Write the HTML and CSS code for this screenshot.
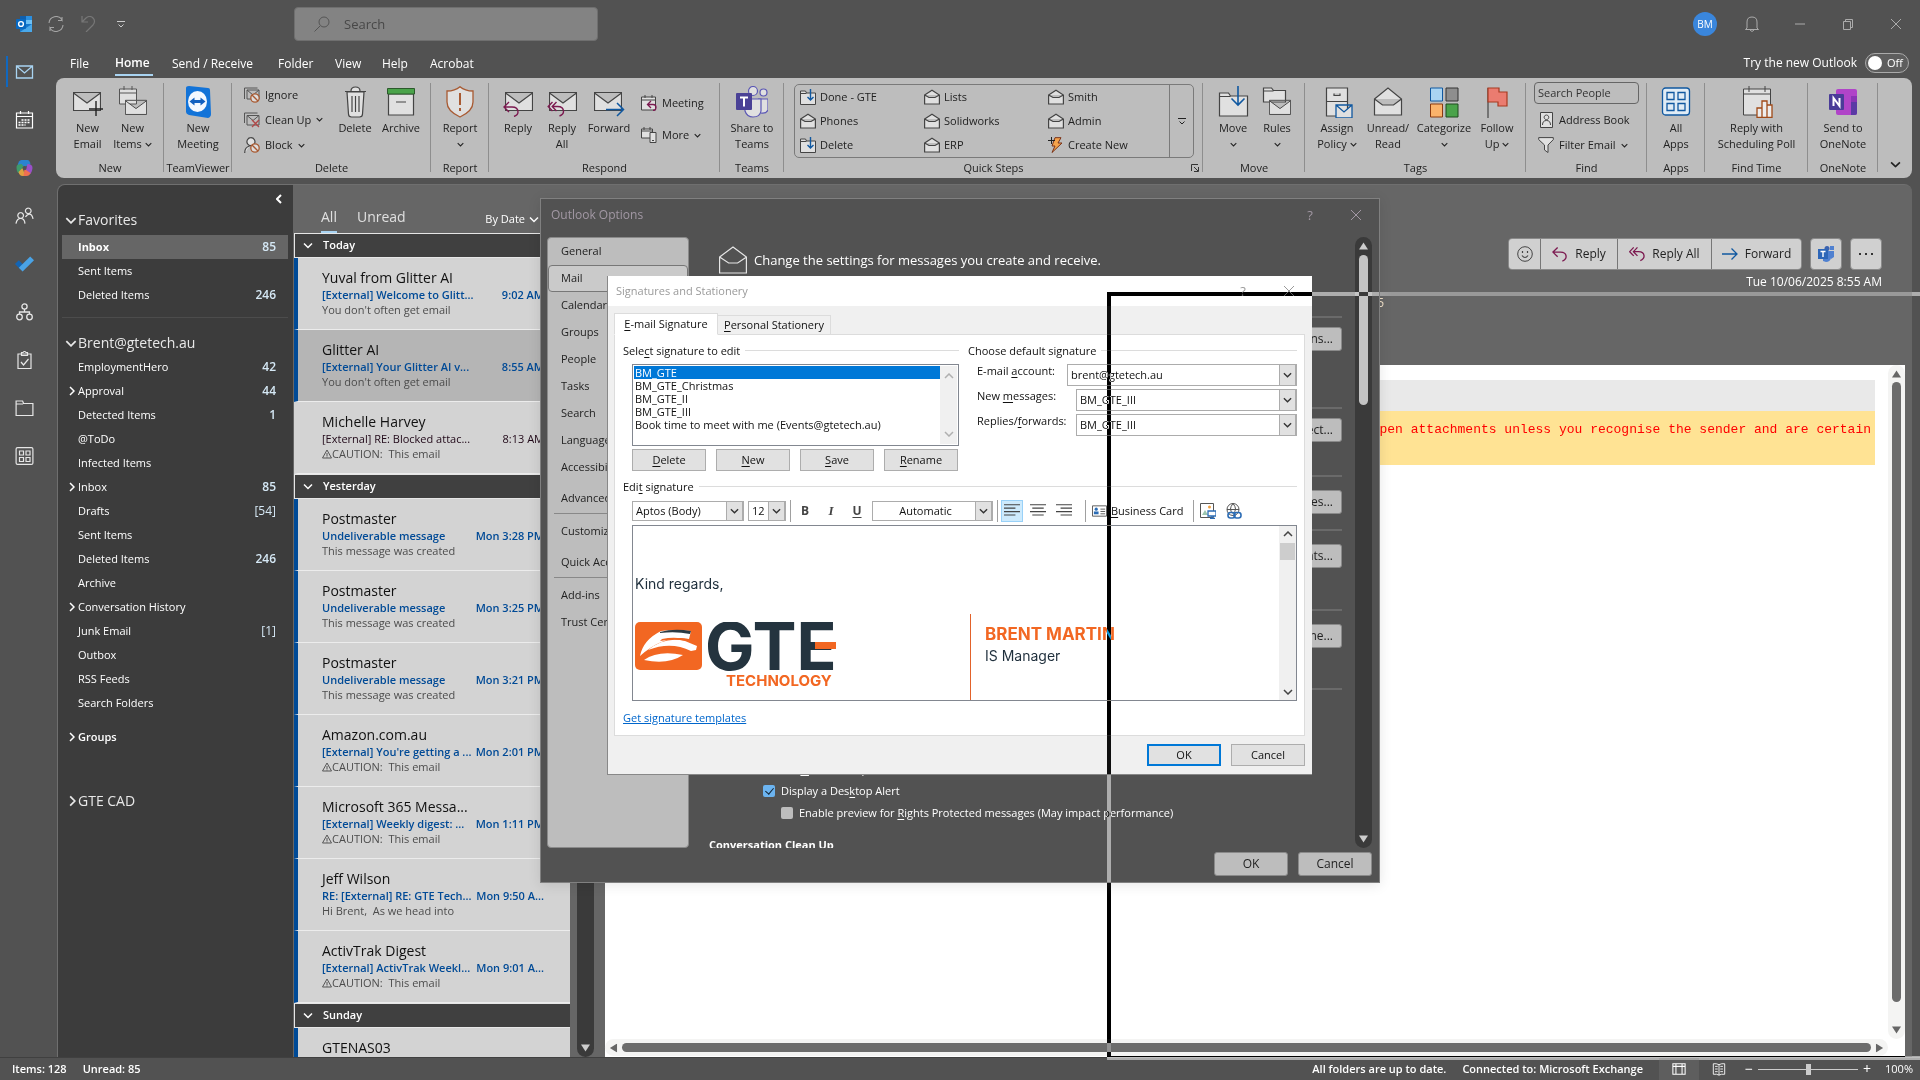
FILE: index.html
```html
<!DOCTYPE html>
<html lang="en">
<head>
<meta charset="utf-8">
<title>Inbox - Outlook</title>
<link rel="stylesheet" href="styles.css">
</head>
<body>
<svg class="sprite" aria-hidden="true">
  <symbol id="down" viewBox="0 0 10 6"><path d="M1 1l4 4 4-4" fill="none" stroke="currentColor" stroke-width="1.5"/></symbol>
  <symbol id="right" viewBox="0 0 6 10"><path d="M1 1l4 4-4 4" fill="none" stroke="currentColor" stroke-width="1.5"/></symbol>
  <symbol id="close" viewBox="0 0 12 12"><path d="M1 1l10 10M11 1L1 11" fill="none" stroke="currentColor"/></symbol>
  <symbol id="env" viewBox="0 0 28 22"><path d="M.5 2.500h27v18H.500zM.5 3l13.500 10L27.500 3" fill="#e0e0e0" stroke="#444" stroke-width="1.200"/></symbol>
  <symbol id="openenv" viewBox="0 0 16 16"><path d="M.6 6L8 1.200 15.400 6v9H.600zM.6 6L5 8.500h6L15.400 6" fill="#e0e0e0" stroke="#444" stroke-width="1.200"/></symbol>
  <symbol id="movefolder" viewBox="0 0 16 16"><path d="M.5 2h5l1 2h9v11.500H.500z" fill="#e0e0e0" stroke="#444"/><path d="M.5 4.500h6" stroke="#444"/><path d="M10.500 0v11M7.500 8l3 3 3-3" fill="none" stroke="#1058a0" stroke-width="1.400"/></symbol>
  <symbol id="back" viewBox="0 0 17 16"><path d="M6 1L1 6l5 5M1 6h8q6 0 6 5 0 3-4 4.500" fill="none" stroke="#7c1a50" stroke-width="1.400"/></symbol>
  <symbol id="backall" viewBox="0 0 17 16"><path d="M5 1L.700 5.500 5 10M9 1L4.700 5.500 9 10M5 5.500h5q6 0 6 5 0 3-4 4.500" fill="none" stroke="#7c1a50" stroke-width="1.400"/></symbol>
  <symbol id="tri" viewBox="0 0 10 8"><path d="M5 0l5 8H0z" fill="currentColor"/></symbol>
  <symbol id="warn" viewBox="0 0 10 10"><path d="M5 1l4.500 8h-9zM5 4v3M5 7.500v1" fill="none" stroke="#555"/></symbol>
</svg>

<div class="app">
  <header class="titlebar">
    <svg class="i16" viewBox="0 0 16 16"><path fill="#2a8fe0" d="M4 0h12v8H4z"/><path fill="#0f5fae" d="M4 0h6v4H4z"/><path fill="#6cc0f5" d="M10 4h6v4h-6z"/><path fill="#1477cc" d="M4 8h12v8H4z"/><path fill="#49a8ea" d="M4 16l12-8v8z"/><rect y="3" width="10" height="10" rx="1" fill="#0868c0"/><circle cx="5" cy="8" r="2.400" fill="none" stroke="#fff" stroke-width="1.400"/></svg>
    <svg class="i16" viewBox="0 0 16 16"><path d="M1 7a7 7 0 0 1 13-3V1M14 4.500h-4M15 9a7 7 0 0 1-13 3v3M2 11.500h4" fill="none" stroke="#a5a5a5" stroke-width="1.100"/></svg>
    <svg class="i16" viewBox="0 0 16 16"><path d="M2 0v6h6M2 6l4-4q4-3 7 0t0 7l-7 7" fill="none" stroke="#777" stroke-width="1.200"/></svg>
    <svg class="i8" viewBox="0 0 8 7"><path d="M0 .500h8M1.500 3.500L4 6l2.500-2.500" fill="none" stroke="#ccc"/></svg>
    <label class="searchbox">
      <svg class="i16" viewBox="0 0 16 16"><circle cx="10" cy="6" r="5" fill="none" stroke="#555"/><path d="M6 10l-5.500 5.500" stroke="#555"/></svg>
      <input type="text" placeholder="Search" aria-label="Search">
    </label>
    <div class="winbuttons">
      <span class="avatar">BM</span>
      <svg class="i16" viewBox="0 0 16 16"><path d="M3 12V6q0-5 5-5t5 5v6l1.500 1.500h-13zM6 14q2 3 4 0" fill="none" stroke="#ababab"/></svg>
      <svg class="i16" viewBox="0 0 16 16"><path d="M3 8h10" stroke="#ababab"/></svg>
      <svg class="i16" viewBox="0 0 16 16"><path d="M3.500 5.500h7v8h-7zM5.500 5V3.500h7v8H11" fill="none" stroke="#ababab"/></svg>
      <svg class="i16 grey" viewBox="-2 -2 16 16"><use href="#close" width="12" height="12"/></svg>
    </div>
  </header>

  <div class="workspace">
    <nav class="rail" aria-label="Apps">
      <a href="#" class="active" aria-label="Mail"><svg viewBox="0 0 18 18"><path d="M1 3h16v12H1zM1 3l8 7 8-7" fill="none" stroke="#a9d4f2" stroke-width="1.300"/></svg></a>
      <a href="#" aria-label="Calendar"><svg viewBox="0 0 18 18"><path d="M1 2h16v15H1zM1 5.500h16M5 0v3M13 0v3" fill="none" stroke="#fff" stroke-width="1.200"/><path d="M6 9h9M3 11.500h12M3 14h7" stroke="#fff" stroke-width="1.600" stroke-dasharray="2 1"/></svg></a>
      <a href="#" aria-label="Copilot"><svg viewBox="0 0 18 18"><path d="M6 1h6q2 0 3 4l-6 3-7-1q1-6 4-6z" fill="#2a83d0"/><path d="M1 8q0-3 5-3l2 2-2 7H3q-2-1-2-6z" fill="#3f9a6a"/><path d="M3 13l4-4 3 8H7q-3 0-4-4z" fill="#e0a040"/><path d="M12 5q5 0 5 4 0 2-2 6l-5-3z" fill="#9950c8"/><path d="M9 10l6 4q-1 3-4 3H8z" fill="#f07050"/><circle cx="9" cy="9" r="2" fill="#525252"/></svg></a>
      <a href="#" aria-label="People"><svg viewBox="0 0 20 18"><path d="M6 5.500a3 3 0 1 1-.1 0M1 17q1-5.500 5-5.500T10.500 17M14 .600a3 3 0 1 1-.1 0M11 10q2-3 4-3 3 0 4 5" fill="none" stroke="#e6e6e6" stroke-width="1.300"/></svg></a>
      <a href="#" aria-label="To Do"><svg viewBox="0 0 20 18"><path d="M0 9l4-4 5 5-4 4z" fill="#1264b4"/><path d="M4 13L16 1l4 4L8 17z" fill="#4aa3e6"/></svg></a>
      <a href="#" aria-label="Org Explorer"><svg viewBox="0 0 18 18"><g fill="none" stroke="#e6e6e6" stroke-width="1.300"><circle cx="9" cy="3.500" r="2.600"/><circle cx="4" cy="14" r="2.800"/><circle cx="14" cy="14" r="2.800"/><path d="M9 6v3M4 11V9h10v2"/></g></svg></a>
      <a href="#" aria-label="Tasks"><svg viewBox="0 0 18 18"><path d="M2.500 3h13v14.500h-13zM6 4.500v-3h1.500q1.500-2 3 0H12v3zM5.500 11l2.500 3 5-6" fill="none" stroke="#e6e6e6" stroke-width="1.200"/></svg></a>
      <a href="#" aria-label="Folders"><svg viewBox="0 0 18 18"><path d="M.6 2h6.500l1 2.500h9.300V16.500H.600zM.6 5h7" fill="none" stroke="#e6e6e6" stroke-width="1.200"/></svg></a>
      <a href="#" aria-label="More apps"><svg viewBox="0 0 18 18"><g fill="none" stroke="#e6e6e6" stroke-width="1.200"><rect x=".6" y=".6" width="16.800" height="16.800" rx="1.500"/><path d="M4 4h4v4H4zM10.500 4h4v4h-4zM4 10.500h4v4H4zM10.500 10.500h4v4h-4z"/></g></svg></a>
    </nav>

    <div class="stage">
      <div class="tabs">
        <a href="#" class="t-file">File</a><a href="#" class="t-home on">Home</a><a href="#" class="t-send">Send / Receive</a><a href="#" class="t-folder">Folder</a><a href="#" class="t-view">View</a><a href="#" class="t-help">Help</a><a href="#">Acrobat</a>
        <label class="trynew">Try the new Outlook <button class="toggle" type="button"><i></i>Off</button></label>
      </div>

      <div class="ribbon">
        <section class="group g-new"><div class="gbody center">
          <button class="big w45"><svg viewBox="0 0 32 32"><use href="#env" x="1" y="4" width="28" height="22"/><path d="M24 15v15M17 23h14" stroke="#222" stroke-width="1.400"/></svg>New<br>Email</button>
          <button class="big w45"><svg viewBox="0 0 32 32"><path d="M2.500 3h17v15h-17zM2.500 7h17M7 0v4M15 0v4" fill="#e0e0e0" stroke="#555"/><use href="#env" x="8" y="11" width="22" height="20"/></svg>New<span>Items <svg class="dn"><use href="#down"/></svg></span></button>
        </div><h2>New</h2></section>
        <section class="group g-tv"><div class="gbody center">
          <button class="big w64"><svg viewBox="0 0 32 32"><path d="M4 2q0-2 3-2l19 2q2 0 2 2l1 24q0 3-3 4L7 29q-3-1-3-3z" fill="#1273d8"/><ellipse cx="15.500" cy="15.500" rx="9.500" ry="10.500" fill="#f3f8ff"/><path d="M7.500 15.500l5-4v2.500h6v-2.500l5 4-5 4V17h-6v2.500z" fill="#1260c0"/></svg>New<br>Meeting</button>
        </div><h2>TeamViewer</h2></section>
        <section class="group g-del"><div class="gbody">
          <div class="smalls r26 delcol">
            <button><svg viewBox="0 0 16 16"><path d="M.5 12V1h13M3 3h12v9H3zl6 5 6-5" fill="none" stroke="#555"/><circle cx="11" cy="11" r="4.200" fill="#ddd" stroke="#a85a32" stroke-width="1.300"/><path d="M8 8l6 6" stroke="#a85a32" stroke-width="1.300"/></svg>Ignore</button>
            <button><svg viewBox="0 0 16 16"><path d="M.5 11V1h13M3 3.500h12V13H3zl6 5 6-5" fill="none" stroke="#555"/><path d="M8 8l7 7M15 8l-7 7" stroke="#b04848" stroke-width="1.300"/></svg>Clean Up <svg class="dn"><use href="#down"/></svg></button>
            <button><svg viewBox="0 0 16 16"><path d="M7 .700a4 4 0 1 1-.1 0M.700 16q0-6 5-7" fill="#e0e0e0" stroke="#444" stroke-width="1.200"/><circle cx="11" cy="11" r="4.200" fill="#ddd" stroke="#a85a32" stroke-width="1.300"/><path d="M8 8l6 6" stroke="#a85a32" stroke-width="1.300"/></svg>Block <svg class="dn"><use href="#down"/></svg></button>
          </div>
          <button class="big w46"><svg viewBox="0 0 32 32"><path d="M8 6h17l-1.500 22q0 3-3 3h-8q-3 0-3-3zM6 5.500h21M12 5q0-4 4.500-4T21 5M13 10v16M16.500 10v16M20 10v16" fill="#e0e0e0" stroke="#444" stroke-width="1.200"/></svg>Delete</button>
          <button class="big w46"><svg viewBox="0 0 32 32"><path d="M3.500 8h25v21h-25z" fill="#e0e0e0" stroke="#444" stroke-width="1.200"/><path d="M2.500 2.500h27V8h-27z" fill="#4aa34a" stroke="#2c5a2c"/><path d="M11 16h10" stroke="#444"/></svg>Archive</button>
        </div><h2>Delete</h2></section>
        <section class="group g-rep"><div class="gbody center">
          <button class="big w46"><svg viewBox="0 0 32 32"><path d="M16 .700Q21 5 29 5v11q0 9-13 15Q3 25 3 16V5q8 0 13-4.300z" fill="#e0e0e0" stroke="#a85a32" stroke-width="1.300"/><path d="M16 7v12M16 22v3" stroke="#a85a32" stroke-width="2"/></svg>Report<span><svg class="dn"><use href="#down"/></svg></span></button>
        </div><h2>Report</h2></section>
        <section class="group g-resp"><div class="gbody pad7">
          <button class="big w44"><svg viewBox="0 0 32 32"><use href="#env" x="3" y="4" width="28" height="22"/><use href="#back" x="1" y="15" width="17" height="16"/></svg>Reply</button>
          <button class="big w44"><svg viewBox="0 0 32 32"><use href="#env" x="3" y="4" width="28" height="22"/><use href="#backall" x="1" y="15" width="18" height="16"/></svg>Reply<br>All</button>
          <button class="big w50"><svg viewBox="0 0 32 32"><use href="#env" x="1" y="4" width="28" height="22"/><path d="M13 23.500h17M24 17l6.500 6.500-6.500 6.500" fill="none" stroke="#1058a0" stroke-width="1.500"/></svg>Forward</button>
          <div class="smalls r32">
            <button><svg viewBox="0 0 16 16"><path d="M.5 2h14v13H.500zM.5 5h14M4 0v3M11 0v3" fill="#e0e0e0" stroke="#444"/><path d="M10 6L6.500 9.500 10 13M7 9.500h5q3 0 3 3t-3 3" fill="none" stroke="#7c1a50" stroke-width="1.300"/></svg>Meeting</button>
            <button><svg viewBox="0 0 16 16"><path d="M.5 2h11v9H.500zM.5 4h11M3 0v3M9 0v3" fill="#e0e0e0" stroke="#444"/><path d="M9 5.500h6v10H9zM11 13.500h2" fill="#e0e0e0" stroke="#444"/></svg>More <svg class="dn"><use href="#down"/></svg></button>
          </div>
        </div><h2>Respond</h2></section>
        <section class="group g-teams"><div class="gbody center">
          <button class="big w64"><svg viewBox="0 0 32 32"><g fill="#e0e0e0" stroke="#5b57b5" stroke-width="1.200"><circle cx="17" cy="5" r="4.500"/><circle cx="27.500" cy="6.500" r="3.500"/><path d="M22 13h10v11q-2 4-7 3"/><path d="M9 13h16v12q-1 6-8 6-6 0-8-6z"/></g><rect x="0" y="7" width="16" height="17" rx="1" fill="#4a4196"/><path d="M4 11.500h8M8 11.500v9" stroke="#fff" stroke-width="2"/></svg>Share to<br>Teams</button>
        </div><h2>Teams</h2></section>
        <section class="group g-quick"><div class="gbody">
          <div class="quick">
            <div class="qgrid">
              <button><svg><use href="#movefolder"/></svg>Done - GTE</button><button><svg><use href="#openenv"/></svg>Lists</button><button><svg><use href="#openenv"/></svg>Smith</button>
              <button><svg><use href="#openenv"/></svg>Phones</button><button><svg><use href="#openenv"/></svg>Solidworks</button><button><svg><use href="#openenv"/></svg>Admin</button>
              <button><svg><use href="#movefolder"/></svg>Delete</button><button><svg><use href="#openenv"/></svg>ERP</button><button><svg viewBox="0 0 16 16"><path d="M7 .700h6L10 6h4L4 15.500 7 9H4z" fill="#f5a34c" stroke="#7a3218"/><path d="M3.500 0v7M0 3.500h7" stroke="#222"/></svg>Create New</button>
            </div>
            <button class="qmore" aria-label="More quick steps"><svg class="i8" viewBox="0 0 8 7"><path d="M0 .500h8M1.500 3.500L4 6l2.500-2.500" fill="none" stroke="#222"/></svg></button>
          </div>
        </div><h2>Quick Steps</h2><svg class="launcher" viewBox="0 0 8 8"><path d="M.5 7V.500H7M3 3l4 4M7.500 3v4.500H3" fill="none" stroke="#333"/></svg></section>
        <section class="group g-move"><div class="gbody pad8">
          <button class="big w44"><svg viewBox="0 0 32 32"><path d="M2.500 7h9l2 3h17v20h-28zM2.500 10.500h11" fill="#e0e0e0" stroke="#444" stroke-width="1.200"/><path d="M21 0v19M14.500 12.500L21 19l6.500-6.500" fill="none" stroke="#1058a0" stroke-width="1.600"/></svg>Move<span><svg class="dn"><use href="#down"/></svg></span></button>
          <button class="big w44"><svg viewBox="0 0 32 32"><path d="M2.500 2h8l2 2.500h12V16h-22zM2.500 5h10" fill="#e0e0e0" stroke="#444" stroke-width="1.200"/><use href="#env" x="8" y="11" width="22" height="20"/></svg>Rules<span><svg class="dn"><use href="#down"/></svg></span></button>
        </div><h2>Move</h2></section>
        <section class="group g-tags"><div class="gbody pad6">
          <button class="big w52"><svg viewBox="0 0 32 32"><path d="M5.500 2h21v28h-21zM5.500 15.500h21M13 7.500v2h6v-2" fill="#e0e0e0" stroke="#444" stroke-width="1.200"/><path d="M15 19h16v13H15zl8 7 8-7" fill="#e0e0e0" stroke="#1058a0" stroke-width="1.300"/></svg>Assign<span>Policy <svg class="dn"><use href="#down"/></svg></span></button>
          <button class="big w50"><svg viewBox="0 0 32 32"><path d="M2.500 13L16 2l13.500 11v16h-27zl8 6h11l8-6" fill="#e0e0e0" stroke="#444" stroke-width="1.200"/></svg>Unread/<br>Read</button>
          <button class="big w62"><svg viewBox="0 0 32 32"><path d="M2.500 2h12v13h-12z" fill="#a9d4f2" stroke="#1058a0"/><path d="M18 2h12v13H18z" fill="#8e8e8e" stroke="#333"/><path d="M2.500 18h12v13h-12z" fill="#fbb36b" stroke="#8a3a10"/><path d="M18 18h12v13H18z" fill="#4aa34a" stroke="#1f4a1f"/></svg>Categorize<span><svg class="dn"><use href="#down"/></svg></span></button>
          <button class="big w44"><svg viewBox="0 0 32 32"><path d="M7 2v30" stroke="#444" stroke-width="1.200"/><path d="M7 2h11v4h8v14h-9v-4H7z" fill="#ea7c70" stroke="#a83a20" stroke-width="1.200"/></svg>Follow<span>Up <svg class="dn"><use href="#down"/></svg></span></button>
        </div><h2>Tags</h2></section>
        <section class="group g-find"><div class="gbody">
          <div class="smalls r26 findcol">
            <input type="text" placeholder="Search People" aria-label="Search People">
            <button><svg viewBox="0 0 16 16"><path d="M2.500.500h12v15h-12zM8.500 3a2.300 2.300 0 1 1-.1 0M4.500 13q0-4.500 4-4.500t4 4.500" fill="#e0e0e0" stroke="#444"/></svg>Address Book</button>
            <button><svg viewBox="0 0 16 16"><path d="M.7.600h14.600v2L10 8v7.500L6.500 13V8L.700 2.600z" fill="#e0e0e0" stroke="#444"/></svg>Filter Email <svg class="dn"><use href="#down"/></svg></button>
          </div>
        </div><h2>Find</h2></section>
        <section class="group g-apps"><div class="gbody center">
          <button class="big w44"><svg viewBox="0 0 32 32"><g fill="#e0ecf6" stroke="#1058a0" stroke-width="1.300"><rect x="2.500" y="2" width="27" height="27" rx="3"/><path d="M7 6.500h7v7H7zM18 6.500h7v7h-7zM7 17.500h7v7H7zM18 17.500h7v7h-7z"/></g></svg>All<br>Apps</button>
        </div><h2>Apps</h2></section>
        <section class="group g-time"><div class="gbody center">
          <button class="big w100"><svg viewBox="0 0 32 32"><path d="M2.500 3h27v26h-27zM2.500 8h27M8 0v6M24 0v6" fill="#e0e0e0" stroke="#444"/><path d="M16 22h5v9.500h-5zM21 15h5v16.500h-5zM26 19h5v12.500h-5z" fill="#eee" stroke="#a04a18" stroke-width="1.300"/></svg>Reply with<br>Scheduling Poll</button>
        </div><h2>Find Time</h2></section>
        <section class="group g-note"><div class="gbody center">
          <button class="big w64"><svg viewBox="0 0 32 32"><rect x="9" y="3" width="21" height="26" rx="2" fill="#b044c8"/><path d="M24 10h6v6h-6z" fill="#8a35b5"/><path d="M24 16h6v11q0 2-2 2h-4z" fill="#5b3aa5"/><rect x="2" y="8" width="15" height="16" rx="1" fill="#4a3c98"/><path d="M6.500 20v-8l6 8v-8" fill="none" stroke="#fff" stroke-width="2"/></svg>Send to<br>OneNote</button>
        </div><h2>OneNote</h2></section>
        <svg class="collapse" viewBox="0 0 10 6"><use href="#down"/></svg>
      </div>

      <main class="panes">
        <aside class="folders">
          <div class="fold"><svg viewBox="0 0 6 10"><path d="M5 1L1 5l4 4" fill="none" stroke="#fff" stroke-width="2"/></svg></div>
          <h3><svg class="wide"><use href="#down"/></svg>Favorites</h3>
          <a href="#" class="sel"><b>Inbox</b><em>85</em></a>
          <a href="#">Sent Items</a>
          <a href="#">Deleted Items<em>246</em></a>
          <hr>
          <h3><svg class="wide"><use href="#down"/></svg>Brent@gtetech.au</h3>
          <a href="#">EmploymentHero<em>42</em></a>
          <a href="#" class="sub"><svg><use href="#right"/></svg>Approval<em>44</em></a>
          <a href="#">Detected Items<em>1</em></a>
          <a href="#">@ToDo</a>
          <a href="#">Infected Items</a>
          <a href="#" class="sub"><svg><use href="#right"/></svg>Inbox<em>85</em></a>
          <a href="#">Drafts<em class="thin">[54]</em></a>
          <a href="#">Sent Items</a>
          <a href="#">Deleted Items<em>246</em></a>
          <a href="#">Archive</a>
          <a href="#" class="sub"><svg><use href="#right"/></svg>Conversation History</a>
          <a href="#">Junk Email<em class="thin">[1]</em></a>
          <a href="#">Outbox</a>
          <a href="#">RSS Feeds</a>
          <a href="#">Search Folders</a>
          <a href="#" class="sub groups"><svg><use href="#right"/></svg>Groups</a>
          <h3 class="cad"><svg class="tall"><use href="#right"/></svg>GTE CAD</h3>
        </aside>

        <section class="maillist">
          <div class="filters"><a href="#" class="on">All</a><a href="#">Unread</a><button>By Date <svg class="wide"><use href="#down"/></svg></button></div>
          <div class="scrollwrap">
            <div class="messages">
              <h4><svg class="wide"><use href="#down"/></svg>Today</h4>
              <article class="unread"><h5>Yuval from Glitter AI</h5><p class="subj">[External] Welcome to Glitt...<time>9:02 AM</time></p><p class="prev">You don't often get email</p></article>
              <article class="unread current"><h5>Glitter AI</h5><p class="subj">[External] Your Glitter AI v...<time>8:55 AM</time></p><p class="prev">You don't often get email</p></article>
              <article><h5>Michelle Harvey</h5><p class="subj">[External] RE: Blocked attac...<time>8:13 AM</time></p><p class="prev"><svg><use href="#warn"/></svg>CAUTION:&nbsp; This email</p></article>
              <h4><svg class="wide"><use href="#down"/></svg>Yesterday</h4>
              <article class="unread"><h5>Postmaster</h5><p class="subj">Undeliverable message<time>Mon 3:28 PM</time></p><p class="prev">This message was created</p></article>
              <article class="unread"><h5>Postmaster</h5><p class="subj">Undeliverable message<time>Mon 3:25 PM</time></p><p class="prev">This message was created</p></article>
              <article class="unread"><h5>Postmaster</h5><p class="subj">Undeliverable message<time>Mon 3:21 PM</time></p><p class="prev">This message was created</p></article>
              <article class="unread"><h5>Amazon.com.au</h5><p class="subj">[External] You're getting a ...<time>Mon 2:01 PM</time></p><p class="prev"><svg><use href="#warn"/></svg>CAUTION:&nbsp; This email</p></article>
              <article class="unread"><h5>Microsoft 365 Messa...</h5><p class="subj">[External] Weekly digest: ...<time>Mon 1:11 PM</time></p><p class="prev"><svg><use href="#warn"/></svg>CAUTION:&nbsp; This email</p></article>
              <article class="unread"><h5>Jeff Wilson</h5><p class="subj">RE: [External] RE: GTE Tech...<time>Mon 9:50 A...</time></p><p class="prev">Hi Brent,&nbsp; As we head into</p></article>
              <article class="unread"><h5>ActivTrak Digest</h5><p class="subj">[External] ActivTrak Weekl...<time>Mon 9:01 A...</time></p><p class="prev"><svg><use href="#warn"/></svg>CAUTION:&nbsp; This email</p></article>
              <h4><svg class="wide"><use href="#down"/></svg>Sunday</h4>
              <article class="unread"><h5>GTENAS03</h5></article>
            </div>
            <div class="vbar dark"><svg class="flip"><use href="#tri"/></svg></div>
          </div>
        </section>

        <section class="reading">
          <div class="actions">
            <div class="joined">
              <button aria-label="React"><svg viewBox="0 0 16 16"><circle cx="8" cy="8" r="7.300" fill="none" stroke="#444"/><path d="M5 9.500q3 4 6 0M5.500 5v2M10.500 5v2" fill="none" stroke="#444" stroke-width="1.200"/></svg></button><button><svg><use href="#back"/></svg>Reply</button><button><svg><use href="#backall"/></svg>Reply All</button><button><svg viewBox="0 0 16 16"><path d="M0 8h15M9.500 2.500L15 8l-5.500 5.500" fill="none" stroke="#1058a0" stroke-width="1.300"/></svg>Forward</button>
            </div>
            <button class="solo" aria-label="Share to Teams"><svg viewBox="0 0 16 16"><circle cx="9" cy="2.500" r="2.500" fill="#3a62b0"/><path d="M5 5h8v7q-1 4-5 4l-3-1zM12 0h4v4h-4zM13 5h3v6l-3 2z" fill="#4f80d0"/><path d="M0 3h10v10H0z" fill="#2d66b8"/><path d="M2.500 5.500h5M5 5.500v5.500" stroke="#fff" stroke-width="1.400"/></svg></button>
            <button class="solo" aria-label="More actions"><svg viewBox="0 0 16 16"><path d="M1 8h2M7 8h2M13 8h2" stroke="#333" stroke-width="2"/></svg></button>
          </div>
          <div class="stamp">Tue 10/06/2025 8:55 AM</div>
          <div class="sent">Tue 10/06/2025</div>
          <div class="paper">
            <div class="prow">
              <div class="mail"><div class="strip"></div><p class="caution">open attachments unless you recognise the sender and are certain</p></div>
              <div class="vbar light"><svg><use href="#tri"/></svg><i></i><svg class="flip"><use href="#tri"/></svg></div>
            </div>
            <div class="hbar"><svg class="left"><use href="#tri"/></svg><i></i><svg class="rt"><use href="#tri"/></svg></div>
          </div>
        </section>
      </main>
    </div>
  </div>

  <footer class="status">
    <span>Items: 128</span><span>Unread: 85</span>
    <span class="push">All folders are up to date.</span><span>Connected to: Microsoft Exchange</span>
    <div class="views">
      <button class="view on" aria-label="Normal view"><svg viewBox="0 0 16 16"><path d="M1 2h14v12H1zM1 5h14M4.500 2v12M11.500 2v12" fill="none" stroke="#fff" stroke-width="1.200"/></svg></button>
      <button class="view" aria-label="Reading view"><svg viewBox="0 0 16 16"><path d="M8 3q-3-1.500-6.500-1v12q4-.500 6.500 1 2.500-1.500 6.500-1V2Q11 1.500 8 3v12M3.500 5h3M3.500 8h3M3.500 11h3M9.500 5h3M9.500 8h3M9.500 11h3" fill="none" stroke="#fff"/></svg></button>
      <div class="zoom"><b>−</b><div class="track"><i></i></div><b>+</b></div>
      <span class="pct">100%</span>
    </div>
  </footer>

  <div class="options" role="dialog" aria-label="Outlook Options">
    <div class="dtitle"><span>Outlook Options</span><i>?</i><svg><use href="#close"/></svg></div>
    <div class="obody">
      <nav class="onav"><a href="#">General</a><a href="#" class="on">Mail</a><a href="#">Calendar</a><a href="#">Groups</a><a href="#">People</a><a href="#">Tasks</a><a href="#">Search</a><a href="#">Language</a><a href="#">Accessibility</a><a href="#" class="gap">Advanced</a><hr><a href="#">Customize Ribbon</a><a href="#" class="gap">Quick Access Toolbar</a><hr><a href="#">Add-ins</a><a href="#">Trust Center</a></nav>
      <div class="ocontent">
        <p class="lead"><svg viewBox="0 0 28 28"><path d="M.6 11L14 1l13.400 10v16H.600zl9 6h9l9-6" fill="none" stroke="#e6e6e6" stroke-width="1.200"/></svg>Change the settings for messages you create and receive.</p>
        <div class="sec s91"><button>Editor Options...</button></div>
        <div class="sec s68"><button>Spelling and Autocorrect...</button></div>
        <div class="sec s54 low"><button>Signatures...</button></div>
        <div class="sec s80 low"><button>Stationery and Fonts...</button></div>
        <div class="sec s79 low"><button>Reading Pane...</button></div>
        <div class="sec s70"></div>
        <label class="chk"><input type="checkbox" checked><span>Sho<u>w</u> an envelope icon in the taskbar</span></label>
        <label class="chk"><input type="checkbox" checked><span>Display a Des<u>k</u>top Alert</span></label>
        <label class="chk inset"><input type="checkbox"><span>Enable preview for <u>R</u>ights Protected messages (May impact performance)</span></label>
        <h6>Conversation Clean Up</h6>
      </div>
      <div class="vbar dark obar"><svg><use href="#tri"/></svg><i></i><svg class="flip"><use href="#tri"/></svg></div>
    </div>
    <div class="ofoot"><button>OK</button><button>Cancel</button></div>
  </div>

  <div class="sig" role="dialog" aria-label="Signatures and Stationery">
    <div class="dtitle"><span>Signatures and Stationery</span><i>?</i><svg><use href="#close"/></svg></div>
    <div class="stabs"><button class="on"><u>E</u>-mail Signature</button><button><u>P</u>ersonal Stationery</button></div>
    <div class="spanel">
      <div class="cols">
        <div class="lcol">
          <div class="legend">Sele<u>c</u>t signature to edit</div>
          <div class="listbox"><ul role="listbox"><li class="on">BM_GTE</li><li>BM_GTE_Christmas</li><li>BM_GTE_II</li><li>BM_GTE_III</li><li>Book time to meet with me (Events@gtetech.au)</li></ul>
            <div class="wbar off"><svg class="up"><use href="#down"/></svg><svg><use href="#down"/></svg></div></div>
          <div class="btns"><button><u>D</u>elete</button><button><u>N</u>ew</button><button><u>S</u>ave</button><button><u>R</u>ename</button></div>
        </div>
        <div class="rcol">
          <div class="legend">Choose default signature</div>
          <div class="frow"><label for="acc">E-mail <u>a</u>ccount:</label><div class="combo c230"><select id="acc"><option>brent@gtetech.au</option></select><span><svg><use href="#down"/></svg></span></div></div>
          <div class="frow"><label for="nm">New <u>m</u>essages:</label><div class="combo c221"><select id="nm"><option>BM_GTE_III</option></select><span><svg><use href="#down"/></svg></span></div></div>
          <div class="frow"><label for="rf">Replies/<u>f</u>orwards:</label><div class="combo c221"><select id="rf"><option>BM_GTE_III</option></select><span><svg><use href="#down"/></svg></span></div></div>
        </div>
      </div>
      <div class="legend edit">Edi<u>t</u> signature</div>
      <div class="toolbar">
        <div class="combo c112"><select aria-label="Font"><option>Aptos (Body)</option></select><span><svg><use href="#down"/></svg></span></div>
        <div class="combo c38"><select aria-label="Size"><option>12</option></select><span><svg><use href="#down"/></svg></span></div>
        <i class="vs"></i>
        <button class="tb"><b>B</b></button><button class="tb"><em>I</em></button><button class="tb"><b><u>U</u></b></button>
        <div class="combo c121"><select aria-label="Font colour"><option>Automatic</option></select><span><svg><use href="#down"/></svg></span></div>
        <i class="vs"></i>
        <button class="tb on" aria-label="Align left"><svg viewBox="0 0 14 14"><path d="M0 1.500h14M0 4.500h10M0 7.500h14M0 10.500h10" stroke="#444"/></svg></button>
        <button class="tb" aria-label="Align centre"><svg viewBox="0 0 14 14"><path d="M0 1.500h14M2 4.500h10M0 7.500h14M2 10.500h10" stroke="#444"/></svg></button>
        <button class="tb" aria-label="Align right"><svg viewBox="0 0 14 14"><path d="M0 1.500h14M4 4.500h10M0 7.500h14M4 10.500h10" stroke="#444"/></svg></button>
        <i class="vs wide-gap"></i>
        <button class="card"><svg viewBox="0 0 16 12"><path d="M.5.500h15v11H.500zM9 4h5M9 6.500h5M9 9h5" fill="#fff" stroke="#555"/><circle cx="4.500" cy="4" r="1.700" fill="#2b6cb5"/><path d="M2 9.500V6.500h5v3z" fill="#2b6cb5"/></svg><span><u>B</u>usiness Card</span></button>
        <i class="vs"></i>
        <button class="tb" aria-label="Picture"><svg viewBox="0 0 16 16"><path d="M.5.500h13v14H.500z" fill="#fff" stroke="#555"/><path d="M2 12l3-5 3 5z" fill="#9cc6b0"/><circle cx="9.500" cy="4" r="1.500" fill="#f0a040"/><path d="M8 8h8v5H8zM10 15.500h5M12 13v2" fill="#fff" stroke="#2b6cb5" stroke-width="1.300"/></svg></button>
        <button class="tb" aria-label="Hyperlink"><svg viewBox="0 0 16 16"><circle cx="7" cy="6.500" r="6" fill="none" stroke="#555"/><path d="M1 6.500h12M7 .500q-5 6 0 10M7 .500q5 6 0 10" fill="none" stroke="#555"/><rect x="2" y="9.500" width="7" height="5.500" rx="2.500" fill="none" stroke="#2b6cb5" stroke-width="1.600"/><rect x="8" y="9.500" width="7" height="5.500" rx="2.500" fill="none" stroke="#2b6cb5" stroke-width="1.600"/></svg></button>
      </div>
      <div class="editor">
        <div class="doc">
          <p class="kind">Kind regards,</p>
          <div class="sigrow">
            <svg class="logo" viewBox="0 0 202 66" role="img" aria-label="GTE Technology">
              <rect x="0" y="0" width="67" height="48" rx="5" fill="#f26722"/>
              <path d="M5 34Q8 18 26 9q14-2 30 0l-2 8Q30 12 5 34z" fill="#fff"/>
              <path d="M25 10q14-4 31-1l-1 3q-14-3-30-1z" fill="#2b3a42"/>
              <path d="M13 28Q30 14 50 19l12 5-1 4-5 1Q36 19 13 28z" fill="#fff"/>
              <path d="M27 17q14-3 27 1l-1 1q-14-3-28 0z" fill="#f26722"/>
              <path d="M9 38q14-10 39-5-15 10-39 5z" fill="#fff"/>
              <text x="70" y="48" class="gte">GTE</text>
              <rect x="180" y="20" width="21" height="7" fill="#f26722"/>
              <text x="91" y="64" class="tech">TECHNOLOGY</text>
            </svg>
            <div class="who"><strong>BRENT MARTIN</strong><span>IS Manager</span></div>
          </div>
        </div>
        <div class="wbar"><svg class="up"><use href="#down"/></svg><i></i><svg><use href="#down"/></svg></div>
      </div>
      <a href="#" class="tmpl">Get signature templates</a>
    </div>
    <div class="sfoot"><button class="ok">OK</button><button>Cancel</button></div>
  </div>

  <div class="marquee"></div>
</div>
</body>
</html>
```
FILE: styles.css
```css
* { box-sizing: border-box; }
body { margin: 0; background: #525252; font: 11px/16px "Open Sans", "Noto Sans", sans-serif; color: #fff; }
h2, h3, h4, h5, h6, p, ul { margin: 0; padding: 0; font-weight: 400; list-style: none; }
button, input, select { font: inherit; color: inherit; margin: 0; padding: 0; border: 0; background: none; }
a { color: inherit; text-decoration: none; }
i { font-style: normal; }
u { text-underline-offset: 2px; }
svg { display: block; flex: none; }
.sprite { position: absolute; width: 0; height: 0; }
.app { position: relative; display: flex; flex-direction: column; height: 100vh; overflow: hidden; background: #525252; }
.i16 { width: 16px; height: 16px; }
.i8 { width: 8px; height: 7px; }
.grey { color: #ababab; }
.dn { display: inline-block; width: 7px; height: 5px; }
.wide { width: 12px; height: 7px; }

/* Title bar */
.titlebar { display: flex; align-items: center; height: 48px; padding: 0 16px; gap: 16px; flex: none; }
.titlebar > .i8 { margin-left: 5px; }
.searchbox { display: flex; align-items: center; width: 304px; height: 34px; margin-left: 153px; padding: 0 19px; gap: 14px; background: #838383; border: 1px solid #6f6f6f; border-radius: 4px; font-size: 13px; }
.searchbox input { flex: 1; min-width: 0; outline: 0; }
.searchbox input::placeholder { color: #484848; opacity: 1; }
.winbuttons { display: flex; align-items: center; gap: 32px; margin-left: auto; }
.avatar { width: 24px; height: 24px; margin-right: -5px; border-radius: 50%; background: #3a86dc; font-size: 10px; line-height: 24px; text-align: center; }

/* Application rail */
.workspace { display: flex; flex: 1; min-height: 0; }
.rail { width: 56px; flex: none; }
.rail a { display: flex; align-items: center; justify-content: center; width: 48px; height: 48px; }
.rail a.active { background: linear-gradient(#1068c0, #1068c0) 6px 8px / 2px 31px no-repeat; }
.rail svg { width: 19px; height: 18px; }
.stage { display: flex; flex-direction: column; flex: 1; min-width: 0; }

/* Ribbon */
.tabs { display: flex; align-items: center; height: 30px; padding: 0 11px 0 14px; font-size: 12px; flex: none; }
.tabs a { line-height: 22px; padding-top: 2px; }
.tabs .on { font-weight: 600; border-bottom: 2px solid #a9d4f2; }
.t-file { width: 25px; margin-right: 20px; }
.t-home { width: 38px; margin-right: 19px; }
.t-send { width: 90px; margin-right: 16px; }
.t-folder { width: 41px; margin-right: 16px; }
.t-view { width: 31px; margin-right: 16px; }
.t-help { width: 32px; margin-right: 16px; }
.trynew { display: flex; align-items: center; gap: 8px; margin-left: auto; }
.toggle { display: flex; align-items: center; gap: 5px; width: 44px; height: 20px; padding-left: 2px; border: 1px solid #aaa; border-radius: 10px; font-size: 11px; background: #5e5e5e; }
.toggle i { width: 14px; height: 14px; border-radius: 50%; background: #fff; }
.ribbon { display: flex; height: 100px; margin-right: 8px; background: #bdbdbd; border-radius: 8px; color: #222; flex: none; }
.group { position: relative; display: flex; flex-direction: column; flex: none; background: linear-gradient(#8e8e8e, #8e8e8e) right 5px / 1px 89px no-repeat; }
.group h2 { text-align: center; font-size: 11px; line-height: 20px; }
.gbody { display: flex; height: 80px; }
.center { justify-content: center; }
.pad6 { padding-left: 6px; } .pad7 { padding-left: 7px; } .pad8 { padding-left: 8px; }
.g-new { width: 108px; } .g-tv { width: 68px; } .g-del { width: 199px; } .g-rep { width: 58px; } .g-resp { width: 231px; } .g-teams { width: 64px; } .g-quick { width: 419px; } .g-move { width: 102px; } .g-tags { width: 221px; } .g-find { width: 121px; } .g-apps { width: 58px; } .g-time { width: 103px; } .g-note { width: 70px; }
.w44 { width: 44px; } .w45 { width: 45px; } .w46 { width: 46px; } .w50 { width: 50px; } .w52 { width: 52px; } .w62 { width: 62px; } .w64 { width: 64px; } .w100 { width: 100px; }
.big { display: flex; flex-direction: column; align-items: center; padding-top: 8px; line-height: 16px; white-space: nowrap; }
.big > svg { width: 32px; height: 32px; margin-bottom: 2px; }
.big span { display: flex; align-items: center; gap: 3px; height: 16px; }
.smalls { display: flex; flex-direction: column; padding-top: 4px; }
.smalls button { display: flex; align-items: center; gap: 5px; white-space: nowrap; }
.smalls button > svg:first-child { width: 16px; height: 16px; }
.r26 button { height: 26px; }
.r32 { padding: 9px 0 0 7px; }
.r32 button { height: 32px; }
.delcol { width: 100px; padding-left: 12px; }
.findcol { width: 114px; padding-left: 8px; }
.findcol input { width: 105px; height: 22px; margin-bottom: 3px; padding: 0 3px; border: 1px solid #666; border-radius: 4px; outline: 0; }
.findcol input::placeholder { color: #333; opacity: 1; }
.findcol button { padding-left: 4px; }
.quick { display: flex; width: 400px; height: 74px; margin: 6px 0 0 10px; border: 1px solid #7a7a7a; border-radius: 5px; }
.qgrid { display: grid; flex: 1; grid-template-columns: 124px 124px 1fr; padding-left: 5px; }
.qgrid button { display: flex; align-items: center; gap: 4px; }
.qgrid svg { width: 16px; height: 16px; }
.qmore { display: flex; align-items: center; justify-content: center; width: 24px; border-left: 1px solid #7a7a7a; }
.launcher { position: absolute; right: 4px; bottom: 6px; width: 8px; height: 8px; }
.collapse { width: 11px; height: 7px; margin: 83px auto 0; }

/* Panes */
.panes { display: flex; flex: 1; min-height: 0; margin: 6px 8px 0 1px; border: 1px solid #6f6f6f; border-width: 1px 0 0 1px; border-radius: 8px 8px 0 0; background: #666; overflow: hidden; }
.folders { width: 235px; background: #3c3c3c; flex: none; }
.fold { display: flex; justify-content: flex-end; height: 23px; padding: 9px 11px 0 0; }
.fold svg { width: 6px; height: 10px; }
.folders h3 { display: flex; align-items: center; gap: 1px; height: 24px; padding-left: 7px; font-size: 14px; color: #e8e8e8; }
.folders h3 + a.sel { margin-top: 3px; }
.folders a { display: flex; align-items: center; height: 24px; margin: 0 5px 0 4px; padding: 0 12px 0 16px; }
.folders a.sel { background: #666; }
.folders a.sub { padding-left: 7px; gap: 3px; }
.folders a.sub svg { width: 6px; height: 10px; }
.folders b { font-weight: 700; }
.folders em { margin-left: auto; font-style: normal; font-weight: 600; font-size: 12px; color: #d5e8f5; }
.folders em.thin { font-weight: 400; }
.folders hr { height: 1px; margin: 10px 5px 13px 4px; border: 0; background: #4c4c4c; }
.folders a.groups { margin-top: 10px; font-weight: 600; }
.folders h3.cad { margin-top: 40px; gap: 2px; padding-left: 11px; }
.tall { width: 7px; height: 12px; }
.maillist { display: flex; flex-direction: column; width: 312px; padding-left: 1px; flex: none; overflow: hidden; }
.filters { display: flex; align-items: flex-end; height: 48px; padding: 0 66px 0 27px; gap: 20px; font-size: 14px; flex: none; }
.filters a { line-height: 29px; color: #e0e0e0; border-bottom: 2px solid transparent; }
.filters a.on { border-color: #a9d4f2; }
.filters button { display: flex; align-items: center; gap: 4px; margin-left: auto; font-size: 11px; line-height: 28px; }
.filters .wide { width: 10px; }
.scrollwrap { display: flex; flex: 1; min-height: 0; }
.messages { width: 276px; overflow: hidden; flex: none; }
.messages h4 { display: flex; align-items: center; gap: 10px; height: 25px; padding: 0 0 1px 8px; border: 1px solid #e6e6e6; border-right: 0; background: #404040; font-weight: 600; }
.messages h4 .wide { width: 10px; }
.messages article { height: 72px; padding: 11px 26px 0 24px; border-bottom: 1px solid #ececec; border-left: 4px solid #d3d3d3; background: #d3d3d3; color: #222; }
.messages .unread { border-left-color: #004a96; }
.messages .current { background: #b5b5b5; }
.messages h5 { font-size: 14px; line-height: 18px; color: #111; white-space: nowrap; }
.subj { display: flex; line-height: 15px; color: #200818; white-space: nowrap; font-size: 11px; }
.subj time { margin-left: auto; }
.unread .subj { color: #004a96; font-weight: 600; }
.prev { display: flex; align-items: center; line-height: 15px; color: #4c4c4c; }
.prev svg { width: 10px; height: 10px; }
.vbar { display: flex; flex-direction: column; align-items: center; width: 17px; flex: none; }
.vbar svg, .hbar svg { width: 9px; height: 8px; }
.flip { margin-top: auto; transform: rotate(180deg); }
.dark { background: #3a3a3a; border-radius: 9px; color: #ccc; padding: 5px 0; }
.scrollwrap .dark { margin-left: 7px; }
.reading { display: flex; flex-direction: column; flex: 1; min-width: 0; }
.actions { display: flex; justify-content: flex-end; gap: 8px; padding: 53px 30px 0 0; color: #222; font-size: 12px; }
.actions button { display: flex; align-items: center; justify-content: center; gap: 7px; height: 30px; background: #d0d0d0; }
.actions svg { width: 16px; height: 16px; }
.joined { display: flex; gap: 1px; border: 1px solid #8a8a8a; border-radius: 4px; background: #777; overflow: hidden; height: 32px; }
.joined button:nth-child(1) { width: 31px; } .joined button:nth-child(2) { width: 76px; } .joined button:nth-child(3) { width: 93px; } .joined button:nth-child(4) { width: 89px; }
.actions .solo { width: 32px; height: 32px; border: 1px solid #8a8a8a; border-radius: 4px; }
.stamp { padding: 3px 30px 0 0; text-align: right; font-size: 12px; line-height: 18px; }
.sent { width: 779px; padding-top: 3px; text-align: right; font-size: 12px; line-height: 18px; color: #f0e0c8; }
.paper { display: flex; flex-direction: column; flex: 1; min-height: 0; margin: 53px 7px 0 0; background: #fff; }
.prow { display: flex; flex: 1; min-height: 0; }
.mail { flex: 1; min-width: 0; padding: 15px 13px 0 15px; }
.strip { height: 31px; background: #e9e9e9; }
.caution { height: 54px; padding: 10px 4px 0 0; overflow: hidden; background: #ffe394; color: #f00; font: 13px/18px "Liberation Mono", monospace; text-align: right; white-space: nowrap; }
.light { background: #f4f4f3; border-radius: 9px; color: #666; padding: 5px 0; gap: 4px; }
.light i { width: 9px; flex: 1; margin-bottom: 20px; border-radius: 5px; background: #6c6c6c; }
.hbar { display: flex; align-items: center; gap: 4px; height: 17px; margin: 0 17px 1px 0; padding: 0 4px; background: #f4f4f3; border-radius: 9px; color: #666; }
.hbar i { flex: 1; height: 9px; border-radius: 5px; background: #6c6c6c; }
.left { transform: rotate(-90deg); } .rt { transform: rotate(90deg); }

/* Status bar */
.status { display: flex; align-items: center; height: 23px; padding: 0 7px 0 12px; gap: 16px; background: #525252; border-top: 1px solid #404040; font-weight: 600; line-height: 14px; flex: none; }
.push { margin-left: auto; }
.views { display: flex; align-items: center; }
.view { display: flex; align-items: center; justify-content: center; width: 40px; height: 22px; }
.view.on { background: #5e5e5e; }
.view svg { width: 14px; height: 14px; }
.zoom { display: flex; align-items: center; gap: 5px; margin: 0 14px 0 6px; font-size: 14px; }
.zoom b { font-weight: 400; }
.track { display: flex; justify-content: center; align-items: center; width: 100px; background: linear-gradient(#ccc, #ccc) center / 100% 1px no-repeat; }
.track i { width: 5px; height: 11px; background: #ccc; }
.pct { font-weight: 400; }

/* Dialog shared */
.dtitle { display: flex; align-items: center; }
.dtitle span { margin-right: auto; font-size: 12px; }
.dtitle i { width: 8px; font-size: 13px; text-align: center; }
.dtitle svg { width: 12px; height: 12px; margin-left: 36px; }

/* Outlook Options */
.options { position: absolute; left: 540px; top: 198px; display: flex; flex-direction: column; width: 840px; height: 685px; border: 1px solid #808080; background: #525252; box-shadow: 0 2px 12px rgba(0,0,0,.1); }
.options .dtitle { height: 38px; padding: 0 17px 7px 10px; color: #a298a4; }
.obody { display: flex; height: 611px; padding: 0 7px 0 6px; overflow: hidden; flex: none; }
.onav { width: 142px; border: 1px solid #8a8a8a; border-radius: 4px; background: #bdbdbd; color: #222; overflow: hidden; flex: none; }
.onav a { display: block; height: 27px; padding-left: 12px; line-height: 24px; white-space: nowrap; border: 1px solid transparent; }
.onav a.on { background: #cacaca; border-color: #777; border-radius: 4px; }
.onav a.gap { margin-top: 4px; }
.onav hr { height: 1px; margin: 1px 6px 4px; border: 0; background: #888; }
.ocontent { display: flex; flex-direction: column; width: 653px; padding-left: 20px; flex: none; }
.ocontent > * { flex: none; }
.lead { display: flex; align-items: center; gap: 7px; height: 46px; margin-bottom: 33px; padding-left: 10px; font-size: 13px; }
.lead svg { width: 28px; height: 28px; }
.sec { border-top: 2px solid #6a6a6a; padding-top: 9px; text-align: right; }
.sec.low { padding-top: 13px; }
.sec button, .ofoot button { height: 24px; padding: 0 8px; background: #bdbdbd; border: 1px solid #8a8a8a; border-radius: 3px; color: #222; font-size: 12px; line-height: 22px; }
.s91 { height: 91px; } .s68 { height: 68px; } .s54 { height: 54px; } .s80 { height: 80px; } .s79 { height: 79px; } .s70 { height: 70px; }
.chk { display: flex; align-items: center; gap: 6px; height: 22px; padding-left: 54px; white-space: nowrap; }
.chk.inset { padding-left: 72px; }
.chk input { appearance: none; width: 12px; height: 12px; border-radius: 2px; background: #bdbdbd; }
.chk input:checked { background: #6cb4f0; }
.chk input:checked::after { content: ""; display: block; width: 4px; height: 7px; margin: 1px 0 0 4px; border: solid #123; border-width: 0 1px 1px 0; transform: rotate(40deg); }
.ocontent h6 { margin-top: 10px; font-size: 11px; line-height: 22px; font-weight: 700; }
.obar { margin-left: auto; gap: 5px; }
.obar i { width: 9px; height: 150px; border-radius: 5px; background: #c4c4c4; }
.ofoot { display: flex; justify-content: flex-end; gap: 10px; padding: 4px 7px; }
.ofoot button { width: 74px; }

/* Signatures and Stationery */
.sig { position: absolute; left: 608px; top: 276px; width: 704px; height: 498px; padding-right: 7px; background: linear-gradient(#fff, #fff) 0 0 / 100% 30px no-repeat #f0f0f0; color: #111; box-shadow: 0 0 0 1px #888; clip-path: inset(0 0 -1px -1px); }
.sig .dtitle { height: 30px; padding: 0 10px 0 8px; color: #9a9a9a; }
.sig .dtitle span { font-size: 11px; }
.stabs { display: flex; align-items: flex-end; height: 29px; padding-left: 6px; margin-bottom: -1px; }
.stabs button { height: 20px; border: 1px solid #dcdcdc; border-left: 0; width: 113px; }
.stabs .on { position: relative; width: 104px; height: 22px; background: #fff; border-left: 1px solid #dcdcdc; border-bottom-color: #fff; }
.spanel { height: 402px; margin-left: 6px; padding: 8px 7px 0 8px; border: 1px solid #dcdcdc; background: #fff; }
.cols { display: flex; gap: 9px; }
.lcol { width: 336px; }
.rcol { flex: 1; }
.legend { height: 16px; overflow: hidden; white-space: nowrap; }
.legend::after { content: ""; display: inline-block; width: 100%; height: 1px; margin: 0 -100% 0 5px; background: #dcdcdc; vertical-align: 4px; }
.listbox { display: flex; width: 327px; height: 82px; margin: 5px 0 3px 9px; padding: 1px; border: 1px solid #828790; }
.listbox ul { flex: 1; }
.listbox li { height: 13px; padding-left: 1px; line-height: 13px; white-space: nowrap; }
.listbox .on { background: #0078d7; color: #fff; }
.wbar { display: flex; flex-direction: column; align-items: center; justify-content: space-between; width: 17px; padding: 7px 0; background: #f0f0f0; color: #444; flex: none; }
.wbar svg { width: 10px; height: 6px; }
.wbar.off { color: #b0b0b0; }
.up { transform: rotate(180deg); }
.btns { display: flex; gap: 10px; margin-left: 9px; }
.btns button, .sfoot button { width: 74px; height: 22px; border: 1px solid #adadad; background: #e1e1e1; }
.frow { display: flex; justify-content: space-between; height: 22px; margin: 5px 0 3px; padding-left: 9px; }
.frow + .frow { margin-top: 0; }
.frow label { line-height: 14px; }
.combo { display: flex; border: 1px solid #acacac; background: #fff; }
.combo select { appearance: none; flex: 1; min-width: 0; padding-left: 3px; outline: 0; border-radius: 0; }
.combo span { display: flex; align-items: center; justify-content: center; width: 17px; border: 1px solid #acacac; border-width: 0 1px 0 1px; background: #e1e1e1; color: #333; }
.combo svg { width: 9px; height: 6px; }
.c230 { width: 230px; } .c221 { width: 221px; } .c112 { width: 112px; height: 20px; } .c38 { width: 38px; height: 20px; } .c121 { width: 121px; height: 20px; }
.c121 select { text-align: center; text-align-last: center; }
.edit { margin-top: 8px; }
.toolbar { display: flex; align-items: center; gap: 4px; height: 25px; margin: 3px 0 2px 9px; }
.toolbar .vs { width: 1px; height: 22px; background: #a0a0a0; margin-right: -1px; }
.toolbar .vs.wide-gap { margin-left: 6px; }
.tb { display: flex; align-items: center; justify-content: center; width: 22px; height: 22px; color: #444; font-size: 12px; }
.tb em { font-family: "Liberation Serif", serif; font-weight: 700; font-size: 13px; }
.tb.on { background: #cdeafc; border: 1px solid #99d1f8; }
.tb svg { width: 16px; height: 16px; }
.card { display: flex; align-items: center; gap: 4px; padding: 0 6px 0 3px; }
.card svg { width: 15px; height: 12px; }
.editor { display: flex; height: 176px; margin-left: 9px; border: 1px solid #828790; font-family: Inter, sans-serif; }
.doc { flex: 1; padding-left: 2px; overflow: hidden; color: #1f2f3c; }
.kind { margin-top: 48px; font-size: 14px; line-height: 20px; }
.sigrow { display: flex; gap: 133px; margin-top: 20px; height: 90px; }
.logo { width: 202px; height: 66px; margin-top: 8px; }
.gte { font: 700 66px Inter, sans-serif; fill: #24343f; }
.tech { font: 700 15px Inter, sans-serif; fill: #f26722; }
.who { display: flex; flex-direction: column; padding: 9px 0 0 14px; border-left: 1px solid #e2622a; line-height: 22px; font-size: 14px; white-space: nowrap; }
.who strong { font-size: 17px; color: #f26722; }
.editor .wbar { padding: 5px 0; justify-content: flex-start; }
.editor .wbar i { align-self: stretch; height: 17px; margin: 6px 1px auto; background: #cdcdcd; }
.tmpl { display: inline-block; margin-top: 9px; color: #0066cc; text-decoration: underline; }
.sfoot { display: flex; justify-content: flex-end; gap: 10px; padding-top: 8px; }
.sfoot .ok { border: 2px solid #0078d7; }

/* Inverting selection rectangle */
.marquee { position: absolute; left: 1107px; right: -4px; top: 292px; height: 768px; border: 4px solid #fff; mix-blend-mode: difference; pointer-events: none; }
```
